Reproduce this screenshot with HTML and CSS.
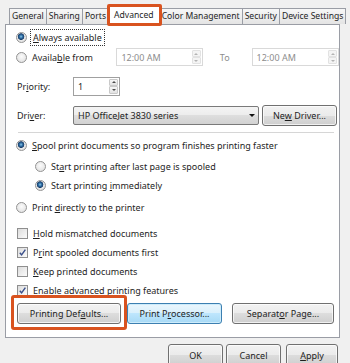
FILE: index.html
```html
<!DOCTYPE html>
<html lang="en">
  <head>
    <meta charset="UTF-8" />
    <title>Printer Properties - Advanced</title>
    <link rel="stylesheet" href="styles.css">
  </head>
  <body>
    <div class="tabs">
      <div class="tab">General</div>
      <div class="tab">Sharing</div>
      <div class="tab">Ports</div>
      <div class="tab active">Advanced</div>
      <div class="tab">Color Management</div>
      <div class="tab">Security</div>
      <div class="tab">Device Settings</div>
    </div>

    <div class="panel">
      <div class="row r-always">
        <span class="radio on"></span>
        <span class="focus"><u>A</u>lways available</span>
      </div>

      <div class="row r-avail">
        <span class="radio"></span>
        <span class="avail-label">Availa<u>b</u>le from</span>
        <div class="spin time">
          <span>12:00 AM</span>
          <span class="arrows"><i class="up"></i><i class="down"></i></span>
        </div>
        <span class="to">To</span>
        <div class="spin time time2">
          <span>12:00 AM</span>
          <span class="arrows"><i class="up"></i><i class="down"></i></span>
        </div>
      </div>

      <div class="row r-priority">
        <span class="field-label">Pr<u>i</u>ority:</span>
        <div class="spin prio">
          <span>1</span>
          <span class="arrows"><i class="up"></i><i class="down"></i></span>
        </div>
      </div>

      <div class="row r-driver">
        <span class="field-label">Dri<u>v</u>er:</span>
        <div class="select">
          <span>HP OfficeJet 3830 series</span>
          <i class="caret"></i>
        </div>
        <button class="btn new-driver">Ne<u>w</u> Driver...</button>
      </div>

      <div class="sep"></div>

      <div class="row r-spool">
        <span class="radio on"></span>
        <span><u>S</u>pool print documents so program finishes printing faster</span>
      </div>
      <div class="row sub r-after">
        <span class="radio"></span>
        <span>St<u>a</u>rt printing after last page is spooled</span>
      </div>
      <div class="row sub r-now">
        <span class="radio on"></span>
        <span>Start printing <u>i</u>mmediately</span>
      </div>
      <div class="row r-direct">
        <span class="radio"></span>
        <span>Print <u>d</u>irectly to the printer</span>
      </div>

      <div class="row r-hold">
        <span class="check"></span>
        <span><u>H</u>old mismatched documents</span>
      </div>
      <div class="row r-check">
        <span class="check on"><svg viewBox="0 0 10 10"><path d="M2 5.2 L4 7.6 L8.2 1.8" /></svg></span>
        <span>P<u>r</u>int spooled documents first</span>
      </div>
      <div class="row r-check">
        <span class="check"></span>
        <span><u>K</u>eep printed documents</span>
      </div>
      <div class="row r-check">
        <span class="check on"><svg viewBox="0 0 10 10"><path d="M2 5.2 L4 7.6 L8.2 1.8" /></svg></span>
        <span><u>E</u>nable advanced printing features</span>
      </div>

      <div class="btn-row">
        <button class="btn defaults marked">Printing Def<u>a</u>ults...</button>
        <button class="btn processor default">Print P<u>r</u>ocessor...</button>
        <button class="btn separator">Separat<u>o</u>r Page...</button>
      </div>
    </div>

    <div class="footer">
      <button class="btn">OK</button>
      <button class="btn">Cancel</button>
      <button class="btn"><u>A</u>pply</button>
    </div>
  </body>
</html>
```

FILE: styles.css
```css
body {
  margin: 0;
  width: 350px;
  height: 363px;
  overflow: hidden;
  background: #f0f0f0;
  font-family: "Noto Sans", "Open Sans", sans-serif;
  font-size: 9px;
  color: #1e1e1e;
}

u {
  text-decoration-thickness: 1px;
  text-underline-offset: 1px;
}

/* tab strip */
.tabs {
  display: flex;
  align-items: flex-end;
  height: 24px;
  padding-left: 9px;
}

.tab {
  height: 15px;
  line-height: 14px;
  padding: 0 2px;
  margin-right: -1px;
  border: 1px solid #9a9da5;
  border-bottom: none;
  background: linear-gradient(#f7f7f7, #e4e4e4);
  font-size: 8.6px;
  white-space: nowrap;
}

.tab.active {
  position: relative;
  z-index: 1;
  height: 18px;
  line-height: 17px;
  margin: 0 -1px -1px 0;
  padding: 0 5px;
  background: #fff;
}

.tab.active::after {
  content: "";
  position: absolute;
  left: -2px;
  right: -3px;
  top: -3px;
  bottom: -1px;
  border: 3px solid #d9531f;
  border-radius: 2px;
}

/* page */
.panel {
  width: 333px;
  height: 312px;
  margin-left: 5px;
  border: 1px solid #9a9da5;
  background: #fff;
  box-sizing: content-box;
  display: flex;
  flex-direction: column;
}

.row {
  display: flex;
  align-items: center;
  height: 18px;
  padding-left: 10px;
  white-space: nowrap;
}

.row.sub {
  padding-left: 29px;
}

.r-always { margin-top: 3px; }
.r-avail { margin-top: 1px; height: 20px; }
.r-priority { margin-top: 9px; height: 20px; padding-left: 11px; }
.r-driver { margin-top: 8px; height: 22px; padding-left: 11px; }
.r-spool { margin-top: 3px; }
.r-after { margin-top: 3px; }
.r-now { margin-top: 1px; }
.r-direct { margin-top: 4px; }
.r-hold { margin-top: 8px; }
.r-check { margin-top: 1px; }

.radio {
  width: 9px;
  height: 9px;
  margin-right: 5px;
  border: 1px solid #939393;
  border-radius: 50%;
  background: radial-gradient(circle at 50% 40%, #fbfbfb, #dcdcdc);
  flex: none;
}

.radio.on {
  background: radial-gradient(circle at 45% 40%, #8cc8ec 0, #2f6ea3 1.6px, #1b3f6b 3px, #e9e9e9 3.6px, #d8d8d8);
}

.check {
  width: 9px;
  height: 9px;
  margin: 0 5px 0 1px;
  border: 1px solid #8f8f8f;
  background: linear-gradient(135deg, #dcdcdc, #fbfbfb);
  flex: none;
  position: relative;
}

.check svg {
  position: absolute;
  left: 0;
  top: 0;
  width: 9px;
  height: 9px;
}

.check path {
  fill: none;
  stroke: #3a4f8a;
  stroke-width: 1.6;
}

.focus {
  outline: 1px dotted #333;
  outline-offset: 1px;
  padding: 0 1px;
}

.avail-label {
  width: 85px;
}

.field-label {
  width: 56px;
}

/* spin boxes */
.spin {
  display: flex;
  align-items: center;
  justify-content: space-between;
  height: 16px;
  border: 1px solid #ababab;
  background: #fff;
  padding-left: 4px;
  box-sizing: content-box;
}

.spin .arrows {
  display: flex;
  flex-direction: column;
  width: 9px;
  height: 14px;
  margin-right: 1px;
}

.spin .arrows i {
  flex: 1;
  border: 1px solid #c9c9c9;
  border-radius: 1px;
  background: linear-gradient(#f6f6f6, #e2e2e2);
  display: flex;
  align-items: center;
  justify-content: center;
}

.spin .arrows i::after {
  content: "";
  border-left: 2px solid transparent;
  border-right: 2px solid transparent;
}

.spin .arrows .up::after { border-bottom: 2px solid #4a4a4a; }
.spin .arrows .down::after { border-top: 2px solid #4a4a4a; }

.time {
  width: 81px;
  color: #8d8d8d;
  border-color: #d9d9d9;
}

.time .arrows i {
  border-color: #e2e2e2;
  background: #f4f4f4;
}

.time .arrows .up::after { border-bottom-color: #b3b3b3; }
.time .arrows .down::after { border-top-color: #b3b3b3; }

.to {
  width: 32px;
  padding-left: 17px;
  color: #8d8d8d;
}

.time2 {
  width: 82px;
}

.prio {
  width: 41px;
  height: 17px;
  border-color: #a0a0a0;
  margin-left: 0;
}

.prio .arrows {
  height: 15px;
}

/* drop-down */
.select {
  width: 176px;
  height: 17px;
  padding: 0 4px;
  display: flex;
  align-items: center;
  justify-content: space-between;
  border: 1px solid #7a7a7a;
  border-radius: 2px;
  background: linear-gradient(#f4f4f4, #ececec 50%, #dedede 50%, #d2d2d2);
}

.caret {
  border-left: 3px solid transparent;
  border-right: 3px solid transparent;
  border-top: 3px solid #111;
  margin-right: -1px;
}

/* buttons */
.btn {
  height: 21px;
  padding: 0;
  font-family: inherit;
  font-size: 9px;
  color: #1e1e1e;
  border: 1px solid #707070;
  border-radius: 3px;
  background: linear-gradient(#f2f2f2, #ebebeb 50%, #dddddd 50%, #cfcfcf);
  box-shadow: inset 0 0 0 1px rgba(255, 255, 255, 0.7);
  white-space: nowrap;
}

.btn.default {
  border-color: #3c7fb1;
  background: linear-gradient(#eaf6fd, #d9f0fc 50%, #bee6fd 50%, #a7d9f5);
  box-shadow: inset 0 0 0 1px #cdecfb;
}

.new-driver {
  width: 75px;
  margin-left: 3px;
}

.sep {
  height: 1px;
  margin: 6px 5px 0 12px;
  background: #d6d6d6;
}

.btn-row {
  display: flex;
  margin-top: 4px;
  padding-left: 11px;
}

.btn-row .btn {
  height: 21px;
}

.defaults {
  width: 104px;
  position: relative;
}

.defaults.marked::after {
  content: "";
  position: absolute;
  left: -7px;
  right: -7px;
  top: -9px;
  bottom: -7px;
  border: 3px solid #d9531f;
  border-radius: 3px;
}

.processor {
  width: 95px;
  margin-left: 6px;
}

.separator {
  width: 102px;
  margin-left: 10px;
}

.footer {
  display: flex;
  justify-content: flex-end;
  gap: 3px;
  width: 338px;
  margin-top: 6px;
}

.footer .btn {
  width: 55px;
  height: 22px;
}

.footer .btn:last-child {
  margin-left: 2px;
  width: 52px;
}
```
